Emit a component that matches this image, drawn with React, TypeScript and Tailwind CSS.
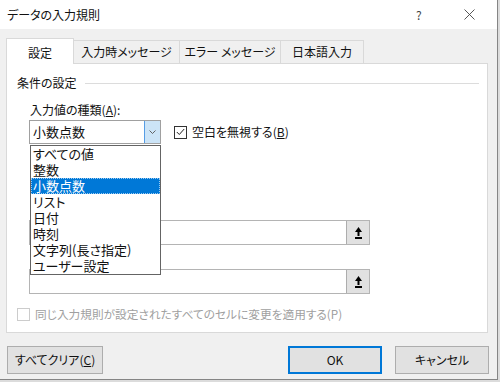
import React from "react";

const font = "[font-family:'Noto_Sans_CJK_JP','Noto_Sans',sans-serif] [font-feature-settings:'palt']";

function RefButton() {
  return (
    <div className="w-[23px] h-full bg-[#e1e1e1] border-l border-[#adadad] flex items-center justify-center">
      <svg width="9" height="14" viewBox="0 0 9 14">
        <path d="M4.5 1 L8 6 L1 6 Z" fill="#000" />
        <rect x="3.5" y="5" width="2" height="5" fill="#000" />
        <rect x="1" y="11" width="7" height="2" fill="#000" />
      </svg>
    </div>
  );
}

function RefInput() {
  return (
    <div className="w-[341px] h-[25px] border border-[#b4b4b4] bg-white flex justify-end">
      <RefButton />
    </div>
  );
}

const items = ["すべての値", "整数", "小数点数", "リスト", "日付", "時刻", "文字列(長さ指定)", "ユーザー設定"];

export default function App() {
  return (
    <div className={`w-[500px] h-[382px] bg-[#dcdcdc] text-[#111] ${font}`}>
      <div className="w-[498px] h-[380px] bg-[#f0f0f0] border-r border-b border-[#858585] flex flex-col">
        {/* title bar */}
        <div className="h-[29px] bg-white flex items-center pl-[7px] shrink-0">
          <span className="text-[12px] leading-[16px] flex-1">データの入力規則</span>
          <span className="text-[12px] leading-[16px] text-[#444] w-[10px] mr-[38px]">?</span>
          <svg width="11" height="11" viewBox="0 0 11 11" className="mr-[22px]">
            <path d="M0.5 0.5 L10.5 10.5 M10.5 0.5 L0.5 10.5" stroke="#444" strokeWidth="0.9" />
          </svg>
        </div>

        {/* tabs */}
        <div className="mt-[9px] pl-[6px] flex items-end h-[26px] relative z-10">
          <div className="w-[68px] h-[26px] pt-[2px] bg-white border-l border-t border-r border-[#d9d9d9] flex items-center justify-center text-[12px]">
            設定
          </div>
          <div className="w-[106px] h-[23px] border-t border-r border-[#d9d9d9] flex items-center justify-center text-[12px] mb-px">
            入力時メッセージ
          </div>
          <div className="w-[101px] h-[23px] border-t border-r border-[#d9d9d9] flex items-center justify-center text-[12px] mb-px">
            エラー メッセージ
          </div>
          <div className="w-[83px] h-[23px] border-t border-r border-[#d9d9d9] flex items-center justify-center text-[12px] mb-px">
            日本語入力
          </div>
        </div>

        {/* panel */}
        <div className="ml-[6px] -mt-px w-[482px] h-[270px] bg-white border border-[#d9d9d9] relative flex flex-col text-[12px]">
          <div className="mt-[11px] pl-[10px] pr-[8px] flex items-center h-[16px]">
            <span className="leading-[16px]">条件の設定</span>
            <div className="flex-1 ml-[8px] h-px bg-[#dcdcdc]" />
          </div>
          <div className="mt-[11px] ml-[23px] leading-[16px] h-[16px]">
            入力値の種類(<span className="underline">A</span>):
          </div>
          <div className="mt-[2px] ml-[22px] flex items-center h-[24px]">
            <div className="w-[132px] h-[24px] border border-[#a0a0a0] flex items-stretch bg-white">
              <div className="flex-1 flex items-center pl-[3px] text-[13px]">小数点数</div>
              <div className="w-[16px] bg-[#cce4f7] border-l border-[#569de5] flex items-center justify-center">
                <svg width="7" height="4" viewBox="0 0 7 4">
                  <path d="M0.5 0.5 L3.5 3.5 L6.5 0.5" stroke="#555" fill="none" strokeWidth="0.9" />
                </svg>
              </div>
            </div>
            <div className="ml-[13px] w-[13px] h-[13px] border border-[#333] bg-white flex items-center justify-center">
              <svg width="9" height="8" viewBox="0 0 9 8">
                <path d="M0.8 4 L3.3 6.5 L8.2 1" stroke="#222" fill="none" strokeWidth="1" />
              </svg>
            </div>
            <span className="ml-[5px] leading-[16px]">
              空白を無視する(<span className="underline">B</span>)
            </span>
          </div>
          <div className="mt-[76px] ml-[22px]">
            <RefInput />
          </div>
          <div className="mt-[24px] ml-[22px]">
            <RefInput />
          </div>
          <div className="mt-[12px] ml-[10px] flex items-center h-[16px]">
            <div className="w-[13px] h-[13px] border border-[#cccccc] bg-white" />
            <span className="ml-[5px] text-[#a0a0a0] leading-[16px] text-[11.7px]">
              同じ入力規則が設定されたすべてのセルに変更を適用する(P)
            </span>
          </div>

          {/* dropdown list overlay */}
          <div className="absolute left-[23px] top-[81px] w-[131px] bg-white border border-[#646464] flex flex-col text-[13px] leading-[16px]">
            {items.map((t, i) => (
              <div
                key={t}
                className={
                  i === 2
                    ? "h-[16px] pl-[2px] bg-[#0078d7] text-white outline outline-1 outline-dotted outline-[#9ccbf2] -outline-offset-1"
                    : "h-[16px] pl-[2px]"
                }
              >
                {t}
              </div>
            ))}
          </div>
        </div>

        {/* buttons */}
        <div className="mt-[13px] pl-[7px] flex items-center text-[12px]">
          <div className="w-[96px] h-[28px] bg-[#e1e1e1] border border-[#adadad] flex items-center justify-center">
            すべてクリア(<span className="underline">C</span>)
          </div>
          <div className="ml-[185px] w-[94px] h-[28px] bg-[#e1e1e1] border-2 border-[#0078d7] flex items-center justify-center">
            OK
          </div>
          <div className="ml-[13px] w-[94px] h-[28px] bg-[#e1e1e1] border border-[#adadad] flex items-center justify-center">
            キャンセル
          </div>
        </div>
      </div>
    </div>
  );
}
